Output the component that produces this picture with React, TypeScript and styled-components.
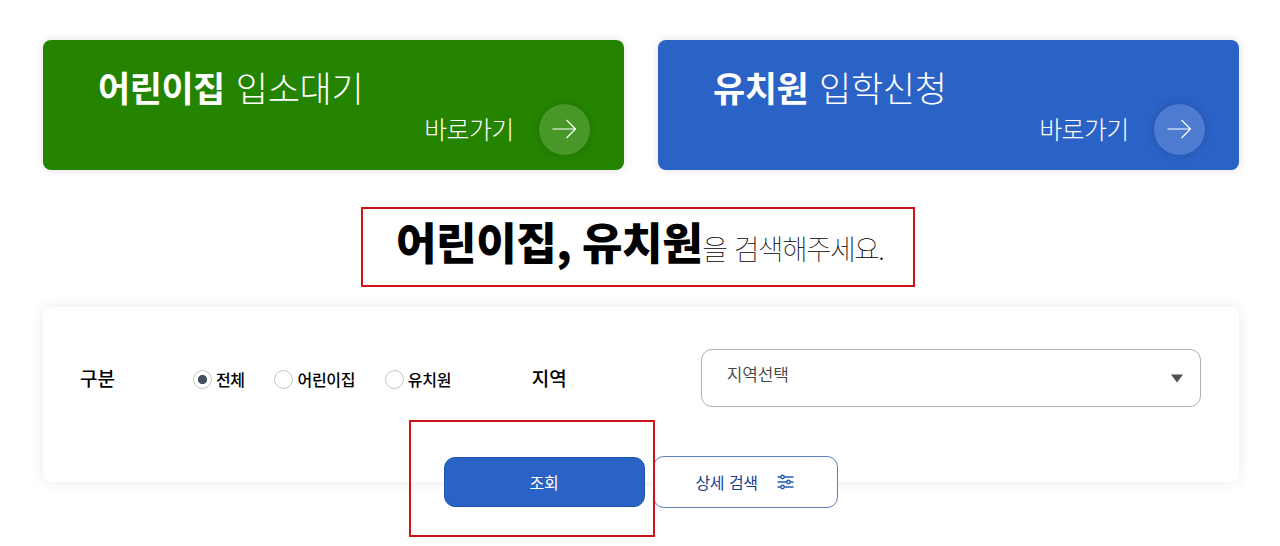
import { useState } from "react"
import styled, { createGlobalStyle } from "styled-components"

const GlobalStyle = createGlobalStyle`
    * {
        box-sizing: border-box;
    }
    body {
        margin: 0;
        background: #fff;
        color: #000;
        font-family: "Noto Sans CJK KR", "Noto Sans", sans-serif;
    }
    button {
        font-family: inherit;
        cursor: pointer;
    }
`

const Page = styled.main`
    width: 1280px;
    height: 546px;
    padding: 39.500px 41.500px 0 42.500px;
    overflow: hidden;
`

const Banners = styled.div`
    display: grid;
    grid-template-columns: 581px 581px;
    justify-content: space-between;
`
const Banner = styled.a<{ $color: string }>`
    display: flex;
    flex-direction: column;
    height: 130px;
    padding: 25px 34px 0 55.500px;
    border-radius: 8px;
    background: ${({ $color }) => $color};
    box-shadow: 0 0 10px rgba(0, 0, 0, .13);
    color: #fff;
`
const BannerTitle = styled.h2`
    margin: 0;
    font-size: 35px;
    line-height: 43px;
    font-weight: 300;
    letter-spacing: -.3px;
    word-spacing: 3.500px;
    white-space: pre;

    strong {
        font-weight: 700;
        letter-spacing: -.5px;
    }
`
const BannerLink = styled.div`
    display: flex;
    align-items: center;
    justify-content: flex-end;
    gap: 25px;
    margin-top: -4px;
    font-size: 25px;
    line-height: 46px;
    font-weight: 300;
    letter-spacing: -.7px;

    > span:first-child {
        padding-bottom: 3px;
    }
`
const Circle = styled.span`
    display: flex;
    align-items: center;
    justify-content: center;
    width: 51px;
    height: 51px;
    border-radius: 50%;
    background: rgba(255, 255, 255, .16);
    box-shadow: 0 0 10px rgba(0, 0, 0, .15);
`

const Heading = styled.h1`
    display: flex;
    align-items: baseline;
    width: 554px;
    height: 80px;
    margin: 37.500px 0 0 318.500px;
    padding-left: 33px;
    border: 2px solid #d0121b;
    font-size: 28px;
    line-height: 65px;
    font-weight: 100;
    letter-spacing: -1.7px;
    word-spacing: 3px;
    white-space: pre;

    strong {
        font-size: 44px;
        font-weight: 900;
        letter-spacing: -.4px;
        word-spacing: 1px;
    }
`

const Panel = styled.section`
    display: flex;
    align-items: flex-start;
    height: 175px;
    margin-top: 20px;
    padding: 42px 38px 0 37.500px;
    border-radius: 8px;
    background: #fff;
    box-shadow: 0 0 14px rgba(0, 0, 0, .09);
`
const Label = styled.span<{ $width: number }>`
    width: ${({ $width }) => $width}px;
    font-size: 19px;
    line-height: 58px;
    font-weight: 500;
    letter-spacing: 0;
`
const Radios = styled.div`
    display: flex;
    width: 339px;
    height: 60px;
    align-items: center;
    gap: 29.700px;
`
const RadioLabel = styled.label`
    display: flex;
    align-items: center;
    gap: 4px;
    font-size: 16px;
    line-height: 24px;
    font-weight: 500;
    letter-spacing: -.3px;
    white-space: nowrap;
`
const Radio = styled.input`
    appearance: none;
    width: 19px;
    height: 19px;
    margin: 0;
    border: 1px solid #c4c6c9;
    border-radius: 50%;
    background: #fff;

    &:checked {
        background: radial-gradient(circle, #434f61 4.2px, #fff 5px);
    }
`
const Select = styled.button`
    display: flex;
    justify-content: space-between;
    width: 500px;
    height: 58px;
    padding: 11px 16px 0 25px;
    border: 1px solid #b0b0b0;
    border-radius: 11px;
    background: #fff;
    color: #444;
    font-size: 17px;
    line-height: 25px;
    font-weight: 350;
    letter-spacing: -.1px;
`
const Caret = styled.svg`
    margin-top: 13px;
`

const Actions = styled.div`
    display: flex;
    position: relative;
    align-items: center;
    gap: 8px;
    width: 394px;
    margin: -26px 0 0 401px;
`
const SearchButton = styled.button`
    width: 201px;
    height: 50px;
    padding: 0;
    border: 1px solid #1b55b5;
    border-radius: 11px;
    background: #2b62c6;
    color: #fff;
    font-size: 16px;
    font-weight: 400;
    letter-spacing: -.3px;
`
const DetailButton = styled.button`
    display: flex;
    align-items: center;
    justify-content: center;
    gap: 20px;
    width: 185px;
    height: 52px;
    padding: 0;
    border: 1px solid #5e7fb9;
    border-radius: 11px;
    background: #fff;
    color: #164193;
    font-size: 16px;
    font-weight: 400;
    letter-spacing: -.5px;
    word-spacing: 2px;
`
const Marker = styled.div`
    position: absolute;
    top: -36px;
    left: -34.500px;
    width: 246px;
    height: 117px;
    border: 2px solid #d0121b;
    pointer-events: none;
`

const Arrow = () => (
    <svg width="26" height="20" viewBox="0 0 26 20" fill="none" stroke="#fff" strokeWidth="1.2">
        <path d="M1.500 10H24M15.500 1L24.500 10L15.500 19" />
    </svg>
)

const Sliders = () => (
    <svg width="17" height="16" viewBox="0 0 17 16" fill="#fff" stroke="#2459b5" strokeWidth="1.400">
        <path d="M0.500 3H16.500M0.500 8H16.500M0.500 13H16.500" />
        <circle cx="5.500" cy="3" r="1.700" />
        <circle cx="11.500" cy="8" r="1.700" />
        <circle cx="5.500" cy="13" r="1.700" />
    </svg>
)

const banners = [
    { name: "어린이집", action: "입소대기", color: "#248400" },
    { name: "유치원", action: "입학신청", color: "#2b62c6" },
]

const kinds = ["전체", "어린이집", "유치원"]

const App = () => {
    const [kind, setKind] = useState("전체")

    return (
        <>
            <GlobalStyle />
            <Page>
                <Banners>
                    {banners.map(({ name, action, color }) => (
                        <Banner key={name} $color={color}>
                            <BannerTitle><strong>{name}</strong> {action}</BannerTitle>
                            <BannerLink>
                                <span>바로가기</span>
                                <Circle><Arrow /></Circle>
                            </BannerLink>
                        </Banner>
                    ))}
                </Banners>
                <Heading><strong>어린이집, 유치원</strong>을 검색해주세요.</Heading>
                <Panel>
                    <Label $width={113}>구분</Label>
                    <Radios>
                        {kinds.map((item) => (
                            <RadioLabel key={item}>
                                <Radio
                                    type="radio"
                                    name="kind"
                                    checked={kind === item}
                                    onChange={() => setKind(item)}
                                />
                                {item}
                            </RadioLabel>
                        ))}
                    </Radios>
                    <Label $width={169}>지역</Label>
                    <Select>
                        지역선택
                        <Caret width="14" height="9" viewBox="0 0 14 9">
                            <path d="M1 .5H13L7 8.500Z" fill="#505050" />
                        </Caret>
                    </Select>
                </Panel>
                <Actions>
                    <SearchButton>조회</SearchButton>
                    <DetailButton>
                        상세 검색
                        <Sliders />
                    </DetailButton>
                    <Marker />
                </Actions>
            </Page>
        </>
    )
}

export default App
